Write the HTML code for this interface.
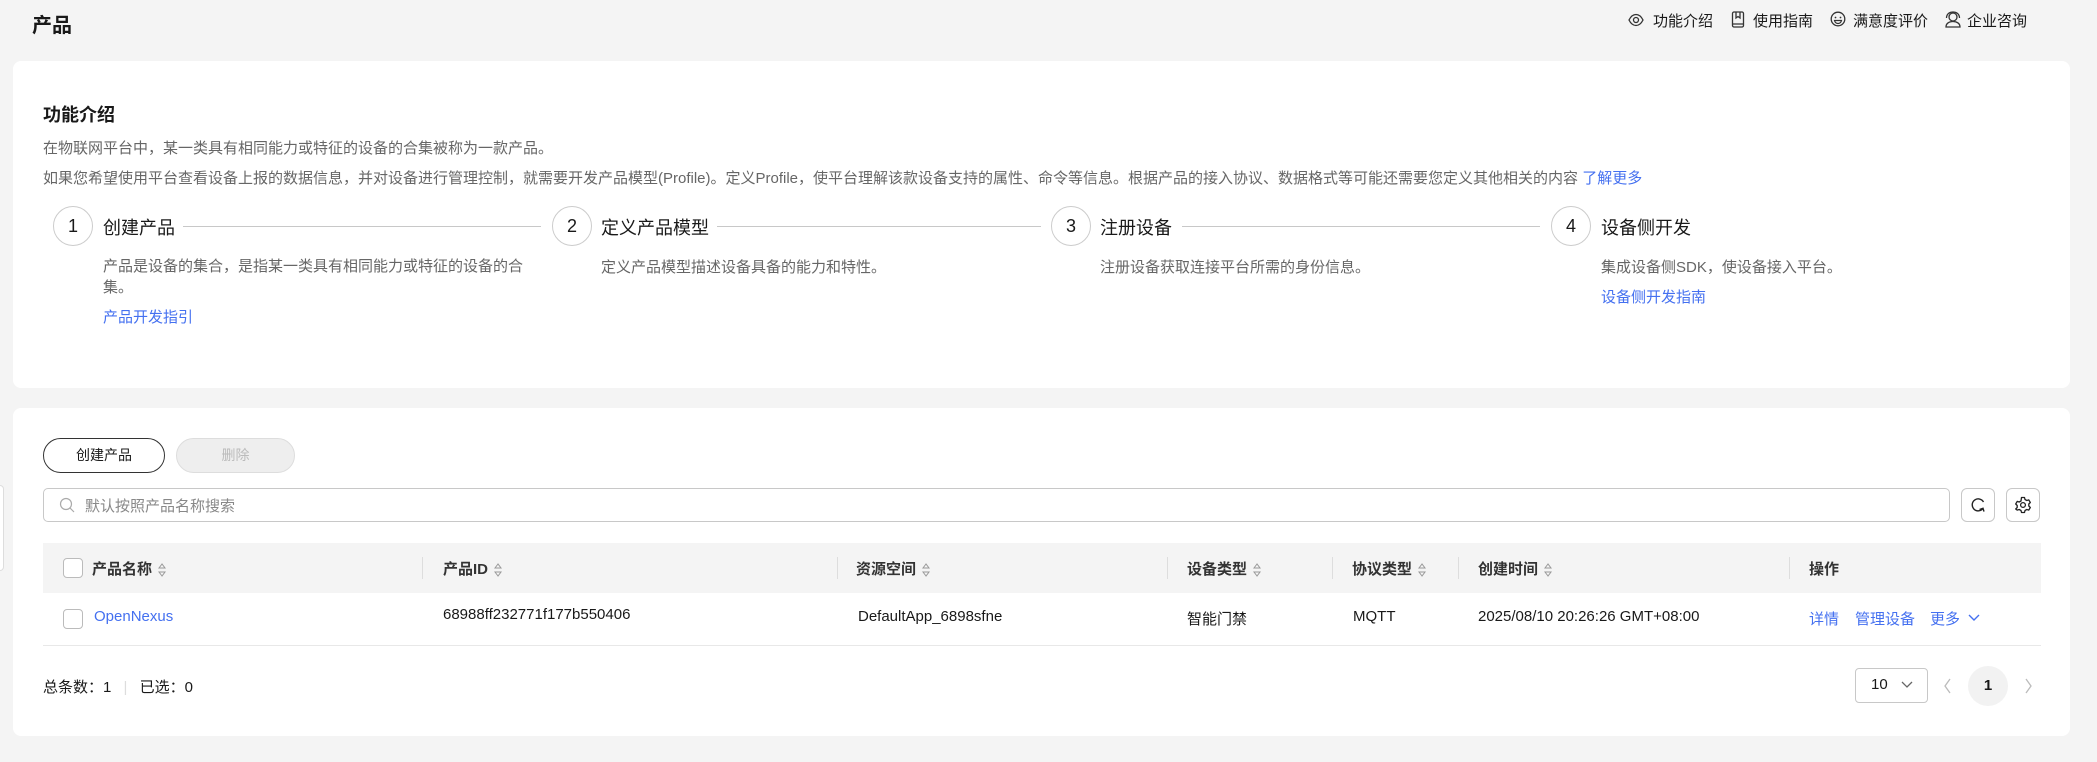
<!DOCTYPE html>
<html><head><meta charset="utf-8"><style>
*{margin:0;padding:0;box-sizing:border-box}
body{width:2097px;height:762px;background:#f4f4f4;font-family:"Liberation Sans","Noto Sans CJK SC",sans-serif;color:#191919;position:relative;overflow:hidden;font-size:15px}
.a{position:absolute;white-space:nowrap}
.card{position:absolute;background:#fff;border-radius:8px;left:13px;width:2057px}
.g{color:#666}
.lk{color:#4470f0}
.circ{position:absolute;width:40px;height:40px;border:1px solid #ccc;border-radius:50%;text-align:center;line-height:38px;font-size:18px;top:206px;background:#fff}
.st{top:214px;font-size:18px}
.ln{position:absolute;height:1px;background:#c8c8c8;top:226px}
.th{top:558px;font-weight:bold;color:#333;font-size:15px}
.dv{position:absolute;top:557px;width:1px;height:22px;background:#ddd}
.td{top:608px;font-size:15px}
.cb{position:absolute;width:20px;height:20px;border:1px solid #bbb;border-radius:4px;background:#fff}
.sort{display:inline-block;vertical-align:middle;margin-left:6px}
</style></head><body>
<div class="a" style="left:32px;top:9px;font-size:20px;font-weight:bold">产品</div>

<svg class="a" style="left:1628px;top:13px" width="16" height="14" viewBox="0 0 16 14"><path d="M1 7C3 3 5.5 1.5 8 1.5S13 3 15 7C13 11 10.5 12.5 8 12.5S3 11 1 7Z" fill="none" stroke="#333" stroke-width="1.3"/><circle cx="8" cy="7" r="2.5" fill="none" stroke="#333" stroke-width="1.3"/></svg>
<div class="a" style="left:1653px;top:10px;font-size:15px">功能介绍</div>
<svg class="a" style="left:1731px;top:11px" width="14" height="17" viewBox="0 0 14 17"><rect x="1.5" y="1" width="11" height="15" rx="1.5" fill="none" stroke="#333" stroke-width="1.3"/><path d="M5 1v6l2-1.5 2 1.5V1M1.5 13h11" fill="none" stroke="#333" stroke-width="1.3"/></svg>
<div class="a" style="left:1753px;top:10px;font-size:15px">使用指南</div>
<svg class="a" style="left:1830px;top:11px" width="16" height="16" viewBox="0 0 16 16"><circle cx="8" cy="8" r="6.8" fill="none" stroke="#333" stroke-width="1.3"/><circle cx="5.5" cy="6.5" r=".9" fill="#333"/><circle cx="10.5" cy="6.5" r=".9" fill="#333"/><path d="M4.5 9.5h7c-.5 2-2 3-3.5 3s-3-1-3.5-3Z" fill="none" stroke="#333" stroke-width="1.2"/></svg>
<div class="a" style="left:1853px;top:10px;font-size:15px">满意度评价</div>
<svg class="a" style="left:1944px;top:11px" width="18" height="17" viewBox="0 0 18 17"><circle cx="9" cy="6" r="4" fill="none" stroke="#333" stroke-width="1.3"/><path d="M2 16c0-3.5 3-5.5 7-5.5s7 2 7 5.5ZM2.5 7c0-4 3-6 6.5-6s6.5 2 6.5 6" fill="none" stroke="#333" stroke-width="1.3"/></svg>
<div class="a" style="left:1967px;top:10px;font-size:15px">企业咨询</div>

<div class="card" style="top:61px;height:327px"></div>
<div class="a" style="left:43px;top:101px;font-size:18px;font-weight:bold">功能介绍</div>
<div class="a g" style="left:43px;top:137px">在物联网平台中，某一类具有相同能力或特征的设备的合集被称为一款产品。</div>
<div class="a g" style="left:43px;top:167px">如果您希望使用平台查看设备上报的数据信息，并对设备进行管理控制，就需要开发产品模型(Profile)。定义Profile，使平台理解该款设备支持的属性、命令等信息。根据产品的接入协议、数据格式等可能还需要您定义其他相关的内容 <span class="lk">了解更多</span></div>

<div class="circ" style="left:53px">1</div><div class="a st" style="left:103px">创建产品</div><div class="ln" style="left:183px;width:358px"></div>
<div class="circ" style="left:552px">2</div><div class="a st" style="left:601px">定义产品模型</div><div class="ln" style="left:717px;width:324px"></div>
<div class="circ" style="left:1051px">3</div><div class="a st" style="left:1100px">注册设备</div><div class="ln" style="left:1182px;width:358px"></div>
<div class="circ" style="left:1551px">4</div><div class="a st" style="left:1601px">设备侧开发</div>
<div class="a g" style="left:103px;top:256px;line-height:21px;white-space:normal;width:440px">产品是设备的集合，是指某一类具有相同能力或特征的设备的合集。</div>
<div class="a lk" style="left:103px;top:306px">产品开发指引</div>
<div class="a g" style="left:601px;top:256px">定义产品模型描述设备具备的能力和特性。</div>
<div class="a g" style="left:1100px;top:256px">注册设备获取连接平台所需的身份信息。</div>
<div class="a g" style="left:1601px;top:256px">集成设备侧SDK，使设备接入平台。</div>
<div class="a lk" style="left:1601px;top:286px">设备侧开发指南</div>

<div class="a" style="left:0;top:485px;width:4px;height:86px;border:1px solid #ddd;border-left:none;border-radius:0 4px 4px 0;background:#fff"></div>

<div class="card" style="top:408px;height:328px"></div>
<div class="a" style="left:43px;top:438px;width:122px;height:35px;border:1px solid #333;border-radius:18px;text-align:center;line-height:33px;font-size:14px">创建产品</div>
<div class="a" style="left:176px;top:438px;width:119px;height:35px;border:1px solid #ddd;background:#eee;color:#bbb;border-radius:18px;text-align:center;line-height:33px;font-size:14px">删除</div>
<div class="a" style="left:43px;top:488px;width:1907px;height:34px;border:1px solid #c8c8c8;border-radius:5px"></div>
<svg class="a" style="left:59px;top:497px" width="16" height="16" viewBox="0 0 16 16"><circle cx="7" cy="7" r="5.5" fill="none" stroke="#aaa" stroke-width="1.2"/><path d="M11 11l4 4" stroke="#aaa" stroke-width="1.2"/></svg>
<div class="a" style="left:85px;top:495px;color:#888">默认按照产品名称搜索</div>
<div class="a" style="left:1961px;top:488px;width:34px;height:34px;border:1px solid #c8c8c8;border-radius:6px"></div>
<svg class="a" style="left:1969px;top:496px" width="18" height="18" viewBox="0 0 18 18"><path d="M14 12.5A6 6 0 1 1 14.5 6" fill="none" stroke="#222" stroke-width="1.4"/><path d="M10.5 13.5l3.5-1.2 1 3.3" fill="none" stroke="#222" stroke-width="1.4"/></svg>
<div class="a" style="left:2006px;top:488px;width:34px;height:34px;border:1px solid #c8c8c8;border-radius:6px"></div>
<svg class="a" style="left:2014px;top:496px" width="18" height="18" viewBox="0 0 18 18"><path d="M7.5 1.5h3l.5 2 1.8 1 2-.6 1.5 2.6-1.5 1.5v2l1.5 1.5-1.5 2.6-2-.6-1.8 1-.5 2h-3l-.5-2-1.8-1-2 .6L1.7 13l1.5-1.5v-2L1.7 8 3.2 5.4l2 .6 1.8-1Z" fill="none" stroke="#222" stroke-width="1.3" stroke-linejoin="round"/><circle cx="9" cy="9" r="2.4" fill="none" stroke="#222" stroke-width="1.3"/></svg>

<div class="a" style="left:43px;top:543px;width:1998px;height:50px;background:#f4f4f4"></div>
<div class="cb" style="left:63px;top:558px"></div>
<svg width="0" height="0" style="position:absolute"><defs><g id="s"><path d="M4 1L1 5h6ZM4 13L1 9h6Z" fill="none" stroke="#999" stroke-width="1"/></g></defs></svg>
<div class="a th" style="left:92px">产品名称<svg class="sort" width="8" height="14"><use href="#s"/></svg></div>
<div class="dv" style="left:422px"></div>
<div class="a th" style="left:443px">产品ID<svg class="sort" width="8" height="14"><use href="#s"/></svg></div>
<div class="dv" style="left:837px"></div>
<div class="a th" style="left:856px">资源空间<svg class="sort" width="8" height="14"><use href="#s"/></svg></div>
<div class="dv" style="left:1167px"></div>
<div class="a th" style="left:1187px">设备类型<svg class="sort" width="8" height="14"><use href="#s"/></svg></div>
<div class="dv" style="left:1332px"></div>
<div class="a th" style="left:1352px">协议类型<svg class="sort" width="8" height="14"><use href="#s"/></svg></div>
<div class="dv" style="left:1458px"></div>
<div class="a th" style="left:1478px">创建时间<svg class="sort" width="8" height="14"><use href="#s"/></svg></div>
<div class="dv" style="left:1789px"></div>
<div class="a th" style="left:1809px">操作</div>

<div class="cb" style="left:63px;top:609px"></div>
<div class="a td lk" style="left:94px">OpenNexus</div>
<div class="a td" style="left:443px;top:606px">68988ff232771f177b550406</div>
<div class="a td" style="left:858px">DefaultApp_6898sfne</div>
<div class="a td" style="left:1187px">智能门禁</div>
<div class="a td" style="left:1353px">MQTT</div>
<div class="a td" style="left:1478px">2025/08/10 20:26:26 GMT+08:00</div>
<div class="a td lk" style="left:1809px">详情</div>
<div class="a td lk" style="left:1855px">管理设备</div>
<div class="a td lk" style="left:1930px">更多</div>
<svg class="a" style="left:1968px;top:614px" width="12" height="8" viewBox="0 0 12 8"><path d="M1 1l5 5 5-5" fill="none" stroke="#4470f0" stroke-width="1.4"/></svg>
<div class="a" style="left:43px;top:645px;width:1998px;height:1px;background:#e8e8e8"></div>

<div class="a" style="left:43px;top:676px">总条数：1 <span style="color:#ddd;margin:0 8px">|</span> 已选：0</div>
<div class="a" style="left:1855px;top:668px;width:73px;height:35px;border:1px solid #c8c8c8;border-radius:4px"></div>
<div class="a" style="left:1871px;top:676px">10</div>
<svg class="a" style="left:1901px;top:681px" width="12" height="8" viewBox="0 0 12 8"><path d="M1 1l5 5 5-5" fill="none" stroke="#666" stroke-width="1.3"/></svg>
<svg class="a" style="left:1944px;top:678px" width="8" height="16" viewBox="0 0 8 16"><path d="M6 1L1 8l5 7" fill="none" stroke="#bbb" stroke-width="1.3"/></svg>
<div class="a" style="left:1968px;top:666px;width:40px;height:40px;border-radius:50%;background:#f2f2f2;text-align:center;line-height:40px;font-weight:bold">1</div>
<svg class="a" style="left:2024px;top:678px" width="8" height="16" viewBox="0 0 8 16"><path d="M2 1l5 7-5 7" fill="none" stroke="#bbb" stroke-width="1.3"/></svg>
</body></html>
